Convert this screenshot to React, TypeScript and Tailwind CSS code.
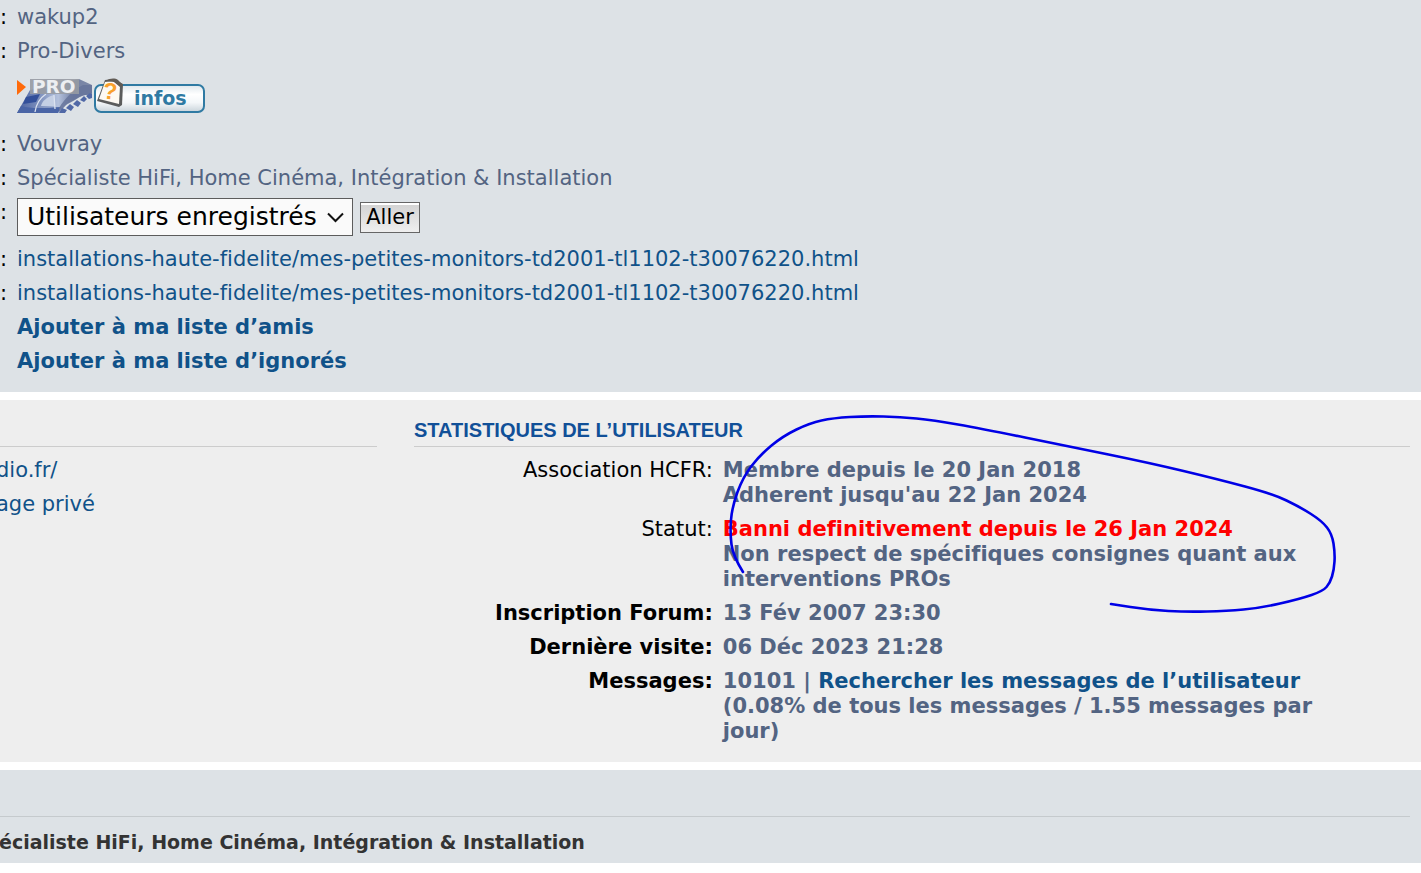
import React from "react";

const penPoints: [number, number][] = [
  [743, 172], [733, 156], [730, 133], [732, 107], [743, 77], [760, 55], [783, 36], [810, 23],
  [833, 18], [867, 16], [900, 17], [933, 20], [983, 29], [1067, 46], [1150, 63], [1217, 79],
  [1273, 94], [1300, 107], [1322, 121], [1332, 134], [1335, 153], [1334, 170], [1330, 183],
  [1323, 191], [1300, 199], [1260, 208], [1227, 211], [1187, 212], [1150, 210], [1111, 204],
];

function smoothPath(points: [number, number][]) {
  let d = `M${points[0][0]} ${points[0][1]}`;
  for (let i = 1; i < points.length - 1; i++) {
    const [x, y] = points[i];
    const [nx, ny] = points[i + 1];
    d += ` Q${x} ${y} ${(x + nx) / 2} ${(y + ny) / 2}`;
  }
  const last = points[points.length - 1];
  return `${d} L${last[0]} ${last[1]}`;
}

function ProBadge() {
  return (
    <svg width="76" height="36" viewBox="0 0 76 36" role="img" aria-label="PRO">
      <defs>
        <linearGradient id="film" x1="0" y1="0" x2="1" y2="0">
          <stop offset="0" stopColor="#4a62a0" />
          <stop offset="0.3" stopColor="#7d90bd" />
          <stop offset="0.55" stopColor="#b4c1dc" />
          <stop offset="0.75" stopColor="#7482a6" />
          <stop offset="1" stopColor="#7e89a6" />
        </linearGradient>
      </defs>
      <path d="M0 35 L13 12 L62 1 L75 7 V17 L66 17 L58 22 L49 27 L42 35 Z" fill="url(#film)" />
      <path d="M9 19 L23 16 L19 24 L6 26 Z" fill="#33509a" />
      <path d="M0 35 L4 28 C14 31 28 30 44 29 L41 35 Z" fill="#4a65a6" />
      <path d="M24 28 C25 23 30 19 37 17 L38 28 Z" fill="#c4cfe4" />
      <path d="M18 34 C19 27 23 20 29 16 M38 31 L37 17" stroke="#dbe2ef" strokeWidth="1.3" fill="none" />
      <path d="M42 30 C48 20 56 12 66 7 L75 7 V15 L62 19 L50 26 L42 34 Z" fill="#66749b" opacity=".85" />
      <path d="M42 35 l3 -5 5 2 -2 3z M49 30 l4 -4 4 3 -3 4z M56 26 l4 -4 4 3 -3 4z M63 22 l4 -4 3 3 -3 3z M69 18 l4 -3 2 1 v4 l-3 1z" fill="#5068a6" />
      <path d="M13 1 H62 V16 H13 Z" fill="#979ba3" opacity=".9" />
      <text x="15" y="15" fontSize="18.5" fontWeight="bold" className="font-['DejaVu_Sans']" fill="#eceef1">PRO</text>
      <path d="M0 2 L9 9 L0 17 Z" fill="#ff6a0a" />
    </svg>
  );
}

function InfosBadge() {
  return (
    <svg width="114" height="36" viewBox="0 0 114 36" role="img" aria-label="infos">
      <defs>
        <linearGradient id="pill" x1="0" y1="0" x2="0" y2="1">
          <stop offset="0" stopColor="#dfe7ec" />
          <stop offset="0.35" stopColor="#ffffff" />
          <stop offset="0.65" stopColor="#f4f7f9" />
          <stop offset="1" stopColor="#c9d3da" />
        </linearGradient>
      </defs>
      <rect x="2" y="7" width="109" height="27" rx="6" fill="url(#pill)" stroke="#2f7aa3" strokeWidth="2" />
      <path d="M12 2 L21 1 L30 6 L29 27 L26 29 L4 23 Z" fill="#5b5c5c" />
      <path d="M12 4 L20 3 L27 8 L26 26 L6 21 Z" fill="#fdf9f2" />
      <path d="M13 3 C17 0 22 0 25 2 L30 7 L27 9 L21 4 Z" fill="#615b55" />
      <text x="10" y="21" fontSize="23" fontWeight="bold" className="font-['Liberation_Sans']" fill="#f9a02c" transform="rotate(8 17 13)">?</text>
      <text x="41" y="27" fontSize="19" fontWeight="bold" className="font-['DejaVu_Sans']" fill="#2f7aa3">infos</text>
    </svg>
  );
}

function ProfileRow({ colon = true, children }: { colon?: boolean; children: React.ReactNode }) {
  return (
    <div className="flex gap-[9px]">
      <dt className="w-2 shrink-0 text-black">{colon ? ":" : ""}</dt>
      <dd className="min-w-0">{children}</dd>
    </div>
  );
}

function StatRow({ label, bold = false, children }: { label: string; bold?: boolean; children: React.ReactNode }) {
  return (
    <div className="flex gap-[10px]">
      <dt className={bold ? "w-[30%] shrink-0 text-right font-bold text-black" : "w-[30%] shrink-0 text-right text-black"}>
        {label}
      </dt>
      <dd className="w-[63%] font-bold">{children}</dd>
    </div>
  );
}

const link = "text-[#105289] hover:underline";

export default function App() {
  return (
    <main className="flex flex-col gap-2 overflow-hidden bg-white font-['DejaVu_Sans',sans-serif] text-[21px] leading-[25px] text-[#536482] [font-variant-ligatures:none]">
      <section className="bg-[#dde2e6] pt-[5px] pb-[18px]">
        <dl className="flex flex-col gap-[9px]">
          <ProfileRow>wakup2</ProfileRow>
          <ProfileRow>Pro-Divers</ProfileRow>
          <ProfileRow colon={false}>
            <div className="flex h-[50px] items-center pb-1">
              <ProBadge />
              <InfosBadge />
            </div>
          </ProfileRow>
          <ProfileRow>Vouvray</ProfileRow>
          <ProfileRow>Spécialiste HiFi, Home Cinéma, Intégration &amp; Installation</ProfileRow>
          <ProfileRow>
            <form className="-mt-0.5 mb-0.5 flex h-[38px] items-center gap-[7px]" onSubmit={(e) => e.preventDefault()}>
              <div className="relative">
                <select
                  aria-label="Groupes"
                  className="block h-[38px] w-[336px] appearance-none border border-[#5c5c5c] bg-[#fafafa] pl-[9px] text-[25px] leading-[34px] text-black"
                >
                  <option>Utilisateurs enregistrés</option>
                </select>
                <svg className="pointer-events-none absolute top-[14px] right-[9px]" width="17" height="11" viewBox="0 0 17 11" fill="none" stroke="#111" strokeWidth="2">
                  <path d="M1 1.5 L8.5 9 L16 1.5" />
                </svg>
              </div>
              <button
                type="submit"
                className="h-[31px] w-[60px] border border-[#666] bg-linear-to-b from-[#d2d2d2] to-[#efefef] text-black shadow-[inset_0_2px_0_#fff]"
              >
                Aller
              </button>
            </form>
          </ProfileRow>
          <ProfileRow>
            <a className={link} href="#forum">installations-haute-fidelite/mes-petites-monitors-td2001-tl1102-t30076220.html</a>
          </ProfileRow>
          <ProfileRow>
            <a className={link} href="#sujet">installations-haute-fidelite/mes-petites-monitors-td2001-tl1102-t30076220.html</a>
          </ProfileRow>
          <ProfileRow colon={false}>
            <a className="font-bold text-[#105289] hover:underline" href="#amis">Ajouter à ma liste d’amis</a>
          </ProfileRow>
          <ProfileRow colon={false}>
            <a className="font-bold text-[#105289] hover:underline" href="#ignores">Ajouter à ma liste d’ignorés</a>
          </ProfileRow>
        </dl>
      </section>

      <section className="relative flex gap-[37px] bg-[#eeeeee] pt-[18px] pr-[11px] pb-[18px]">
        <div className="w-[377px] shrink-0">
          <div className="h-[29px] border-b border-[#cccccc]" />
          <ul className="-ml-1 flex flex-col gap-[9px] pt-[11px]">
            <li><a className={link} href="#site">dio.fr/</a></li>
            <li><a className={link} href="#mp">age privé</a></li>
          </ul>
        </div>
        <div className="min-w-0 flex-1">
          <h3 className="h-[29px] border-b border-[#cccccc] font-['Liberation_Sans',sans-serif] text-xl leading-6 font-bold text-[#115098] uppercase">
            Statistiques de l’utilisateur
          </h3>
          <dl className="flex flex-col gap-[9px] pt-[11px]">
            <StatRow label="Association HCFR:">
              Membre depuis le 20 Jan 2018
              <br />
              Adherent jusqu'au 22 Jan 2024
            </StatRow>
            <StatRow label="Statut:">
              <span className="text-[#ff0000]">Banni definitivement depuis le 26 Jan 2024</span>
              <br />
              Non respect de spécifiques consignes quant aux interventions PROs
            </StatRow>
            <StatRow label="Inscription Forum:" bold>13 Fév 2007 23:30</StatRow>
            <StatRow label="Dernière visite:" bold>06 Déc 2023 21:28</StatRow>
            <StatRow label="Messages:" bold>
              10101 | <a className={link} href="#messages">Rechercher les messages de l’utilisateur</a>
              <br />
              (0.08% de tous les messages / 1.55 messages par jour)
            </StatRow>
          </dl>
        </div>
        <svg className="pointer-events-none absolute top-0 left-0" width="1421" height="230" viewBox="0 0 1421 230" fill="none">
          <path d={smoothPath(penPoints)} stroke="#0000e6" strokeWidth="2.6" strokeLinecap="round" strokeLinejoin="round" />
        </svg>
      </section>

      <section className="bg-[#dde2e6] pr-[11px] pb-[9px]">
        <div className="h-[47px] border-b border-[#c5cacd]" />
        <p className="-ml-px pt-[13px] text-[19px] leading-6 font-bold text-[#333333]">
          écialiste HiFi, Home Cinéma, Intégration &amp; Installation
        </p>
      </section>
    </main>
  );
}
